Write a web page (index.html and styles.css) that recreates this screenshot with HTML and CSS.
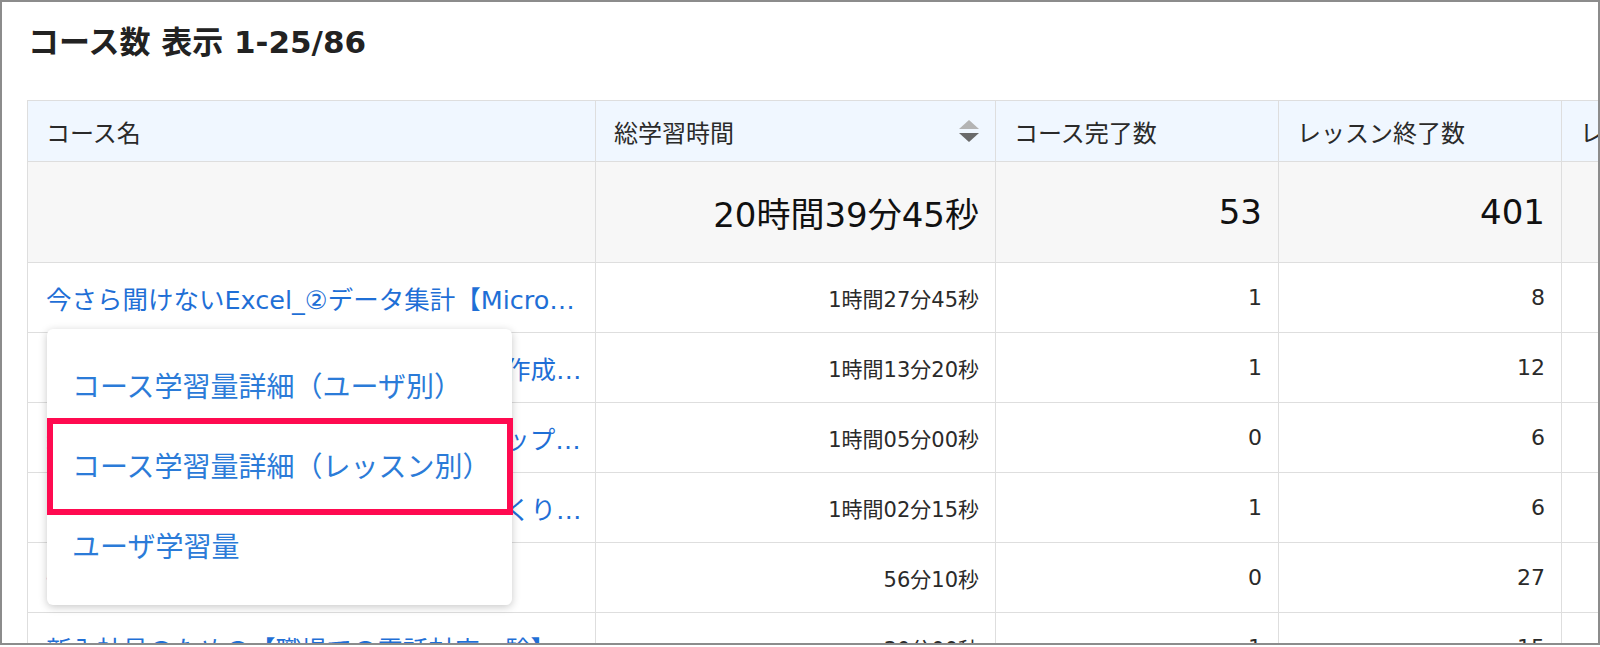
FILE: index.html
```html
<!DOCTYPE html>
<html lang="ja">
<head>
  <meta charset="utf-8">
  <title>コース学習量</title>
  <link rel="stylesheet" href="styles.css">
</head>
<body>
  <div class="frame">
    <h2 class="count-title">コース数 表示 1-25/86</h2>

    <div class="table-wrap">
      <table class="course-table">
        <colgroup>
          <col class="col-name">
          <col class="col-time">
          <col class="col-num">
          <col class="col-num">
          <col class="col-num">
        </colgroup>
        <thead>
          <tr>
            <th>コース名</th>
            <th>
              <div class="sortable">
                <span>総学習時間</span>
                <svg class="sort-icon" width="20" height="22" viewBox="0 0 20 22">
                  <polygon points="0,9 10,0 20,9" fill="#b4b4b4"/>
                  <polygon points="0,13 20,13 10,22" fill="#6a6a6a"/>
                </svg>
              </div>
            </th>
            <th>コース完了数</th>
            <th>レッスン終了数</th>
            <th>レッスン進捗率</th>
          </tr>
        </thead>
        <tbody>
          <tr class="total-row">
            <td></td>
            <td class="num">20時間39分45秒</td>
            <td class="num">53</td>
            <td class="num">401</td>
            <td class="num"></td>
          </tr>
          <tr>
            <td class="name"><a href="#">今さら聞けないExcel_②データ集計【Microsoft 365】</a></td>
            <td class="num time">1時間27分45秒</td>
            <td class="num">1</td>
            <td class="num">8</td>
            <td class="num"></td>
          </tr>
          <tr>
            <td class="name"><a href="#">ゼロから学ぶビジネスメールと報告書の作成入門</a></td>
            <td class="num time">1時間13分20秒</td>
            <td class="num">1</td>
            <td class="num">12</td>
            <td class="num"></td>
          </tr>
          <tr>
            <td class="name"><a href="#">新入社員向けビジネスマナー　スキルアップ講座</a></td>
            <td class="num time">1時間05分00秒</td>
            <td class="num">0</td>
            <td class="num">6</td>
            <td class="num"></td>
          </tr>
          <tr>
            <td class="name"><a href="#">ワード：読みやすい文書のレイアウトづくり講座</a></td>
            <td class="num time">1時間02分15秒</td>
            <td class="num">1</td>
            <td class="num">6</td>
            <td class="num"></td>
          </tr>
          <tr>
            <td class="name"><a href="#">情報セキュリティ基礎</a></td>
            <td class="num time">56分10秒</td>
            <td class="num">0</td>
            <td class="num">27</td>
            <td class="num"></td>
          </tr>
          <tr>
            <td class="name"><a href="#">新入社員のための【職場での電話対応　験】</a></td>
            <td class="num time">30分00秒</td>
            <td class="num">1</td>
            <td class="num">15</td>
            <td class="num"></td>
          </tr>
        </tbody>
      </table>

      <div class="dropdown">
        <a href="#" class="dropdown-item">コース学習量詳細（ユーザ別）</a>
        <a href="#" class="dropdown-item">コース学習量詳細（レッスン別）</a>
        <a href="#" class="dropdown-item">ユーザ学習量</a>
        <div class="mark"></div>
      </div>
    </div>
  </div>
</body>
</html>
```

FILE: styles.css
```css
* {
  box-sizing: border-box;
}
body {
  margin: 0;
  font-family: "DejaVu Sans", "Noto Sans CJK JP", sans-serif;
  color: #222;
  background: #fff;
}
.frame {
  width: 1600px;
  height: 645px;
  border: 2px solid #8c8c8c;
  padding: 22px 0 0 25px;
  overflow: hidden;
}
.count-title {
  margin: 0 0 40px 1px;
  font-size: 31px;
  line-height: 36px;
  font-weight: bold;
  color: #222;
}
.table-wrap {
  position: relative;
}
.course-table {
  border-collapse: collapse;
  table-layout: fixed;
  width: 1818px;
}
.col-name { width: 568px; }
.col-time { width: 400px; }
.col-num { width: 283px; }
.course-table th,
.course-table td {
  border: 1px solid #dedede;
  padding: 0 16px 0 18px;
  white-space: nowrap;
  overflow: hidden;
}
.course-table th {
  height: 61px;
  background-color: #f0f7ff;
  text-align: left;
  font-size: 24px;
  font-weight: normal;
  color: #2a2a2a;
}
.sortable {
  display: flex;
  justify-content: space-between;
  align-items: center;
}
.sort-icon {
  display: block;
}
.course-table td {
  height: 70px;
  font-size: 22px;
  color: #2a2a2a;
}
.course-table td.num {
  text-align: right;
}
.course-table td.time {
  font-size: 21px;
}
.course-table td.name {
  padding-right: 12px;
}
.total-row td {
  height: 101px;
  background-color: #f7f7f7;
  font-size: 34px !important;
  color: #111;
}
.name a {
  display: block;
  overflow: hidden;
  text-overflow: ellipsis;
  color: #1f6fd6;
  text-decoration: none;
  font-size: 25.5px;
}
.dropdown {
  position: absolute;
  left: 20px;
  top: 229px;
  width: 465px;
  padding: 19px 0 17px;
  background: #fff;
  border-radius: 6px;
  box-shadow: 0 2px 8px rgba(0, 0, 0, 0.22);
}
.dropdown-item {
  display: block;
  height: 80px;
  line-height: 80px;
  padding-left: 25px;
  font-size: 28px;
  color: #2b7bd8;
  text-decoration: none;
}
.mark {
  position: absolute;
  left: 0;
  top: 89px;
  width: 466px;
  height: 97px;
  border: 6px solid #ff0a50;
}
```
